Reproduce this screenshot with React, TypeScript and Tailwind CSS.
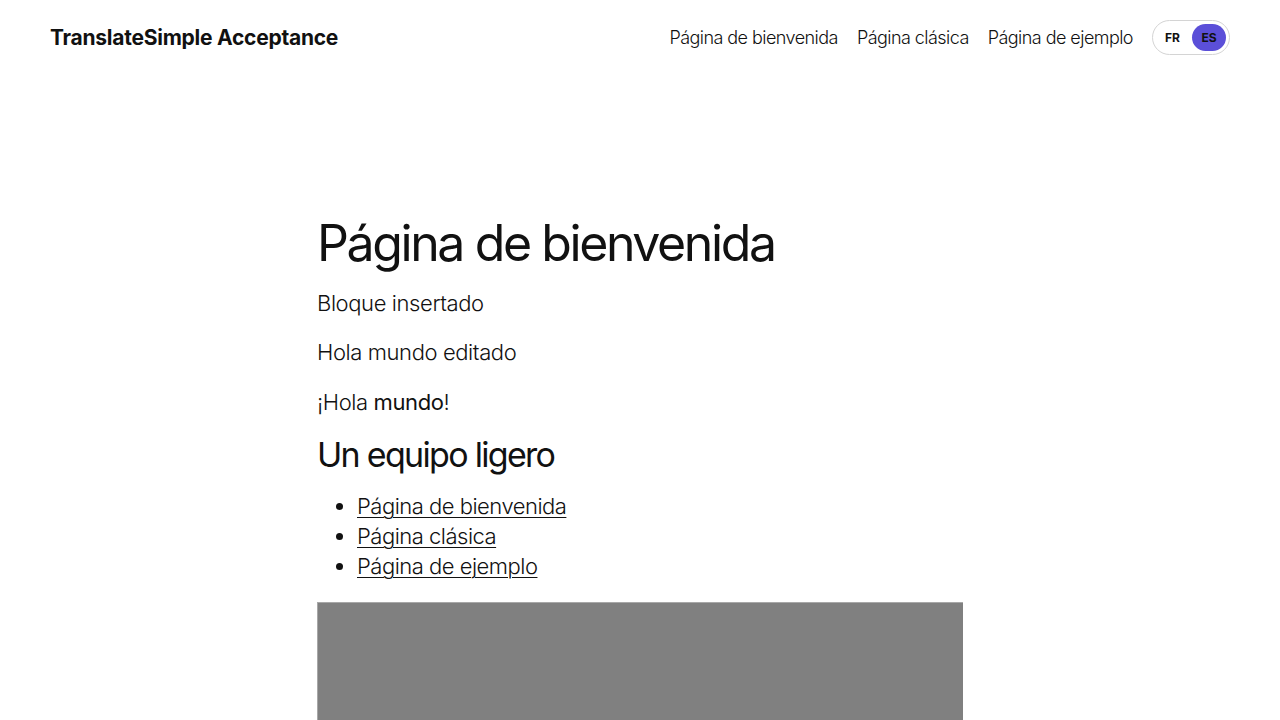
import React from "react";

export default function App() {
  return (
    <div className="min-h-screen bg-white text-[#111]" style={{ fontFamily: "Inter, 'Noto Sans', sans-serif" }}>
      <header className="flex items-center justify-between pl-[50px] pr-[50px] h-[75px]">
        <div className="text-[21px] font-bold tracking-[-0.25px] text-[#111]">TranslateSimple Acceptance</div>
        <nav className="flex items-center">
          <a className="text-[18px] font-light tracking-[-0.55px] text-[#111]">Página de bienvenida</a>
          <a className="ml-[19px] text-[18px] font-light tracking-[-0.55px] text-[#111]">Página clásica</a>
          <a className="ml-[19px] text-[18px] font-light tracking-[-0.55px] text-[#111]">Página de ejemplo</a>
          <div className="ml-[19px] flex items-center h-[35px] w-[78px] rounded-full border border-[#d4d4d4] pl-[12px] pr-[3px]">
            <span className="text-[12px] font-bold text-[#111]">FR</span>
            <span className="ml-auto flex items-center justify-center h-[27px] w-[34px] rounded-full bg-[#5b4fd8] text-[12px] font-bold text-[#111]">ES</span>
          </div>
        </nav>
      </header>
      <main className="mx-auto w-[646px] pt-[136px]">
        <h1 className="text-[50px] font-normal leading-[64px] tracking-[-2.4px] text-[#111]">Página de bienvenida</h1>
        <p className="mt-[13px] text-[22px] font-light leading-[30px] tracking-[-0.4px]">Bloque insertado</p>
        <p className="mt-[19px] text-[22px] font-light leading-[30px] tracking-[-0.4px]">Hola mundo editado</p>
        <p className="mt-[20px] text-[22px] font-light leading-[30px] tracking-[-0.4px]">¡Hola <span className="font-normal">mundo</span>!</p>
        <h2 className="mt-[16px] text-[34px] font-normal leading-[44px] tracking-[-1.7px]">Un equipo ligero</h2>
        <ul className="mt-[14px] list-disc pl-[40px] text-[22px] font-light leading-[30px] tracking-[-0.5px]">
          <li><a className="underline underline-offset-[3px] decoration-1">Página de bienvenida</a></li>
          <li><a className="underline underline-offset-[3px] decoration-1">Página clásica</a></li>
          <li><a className="underline underline-offset-[3px] decoration-1">Página de ejemplo</a></li>
        </ul>
        <div className="mt-[21px] h-[300px] w-full bg-[#808080] border-l border-t border-[#a8a8a8]"></div>
      </main>
    </div>
  );
}
